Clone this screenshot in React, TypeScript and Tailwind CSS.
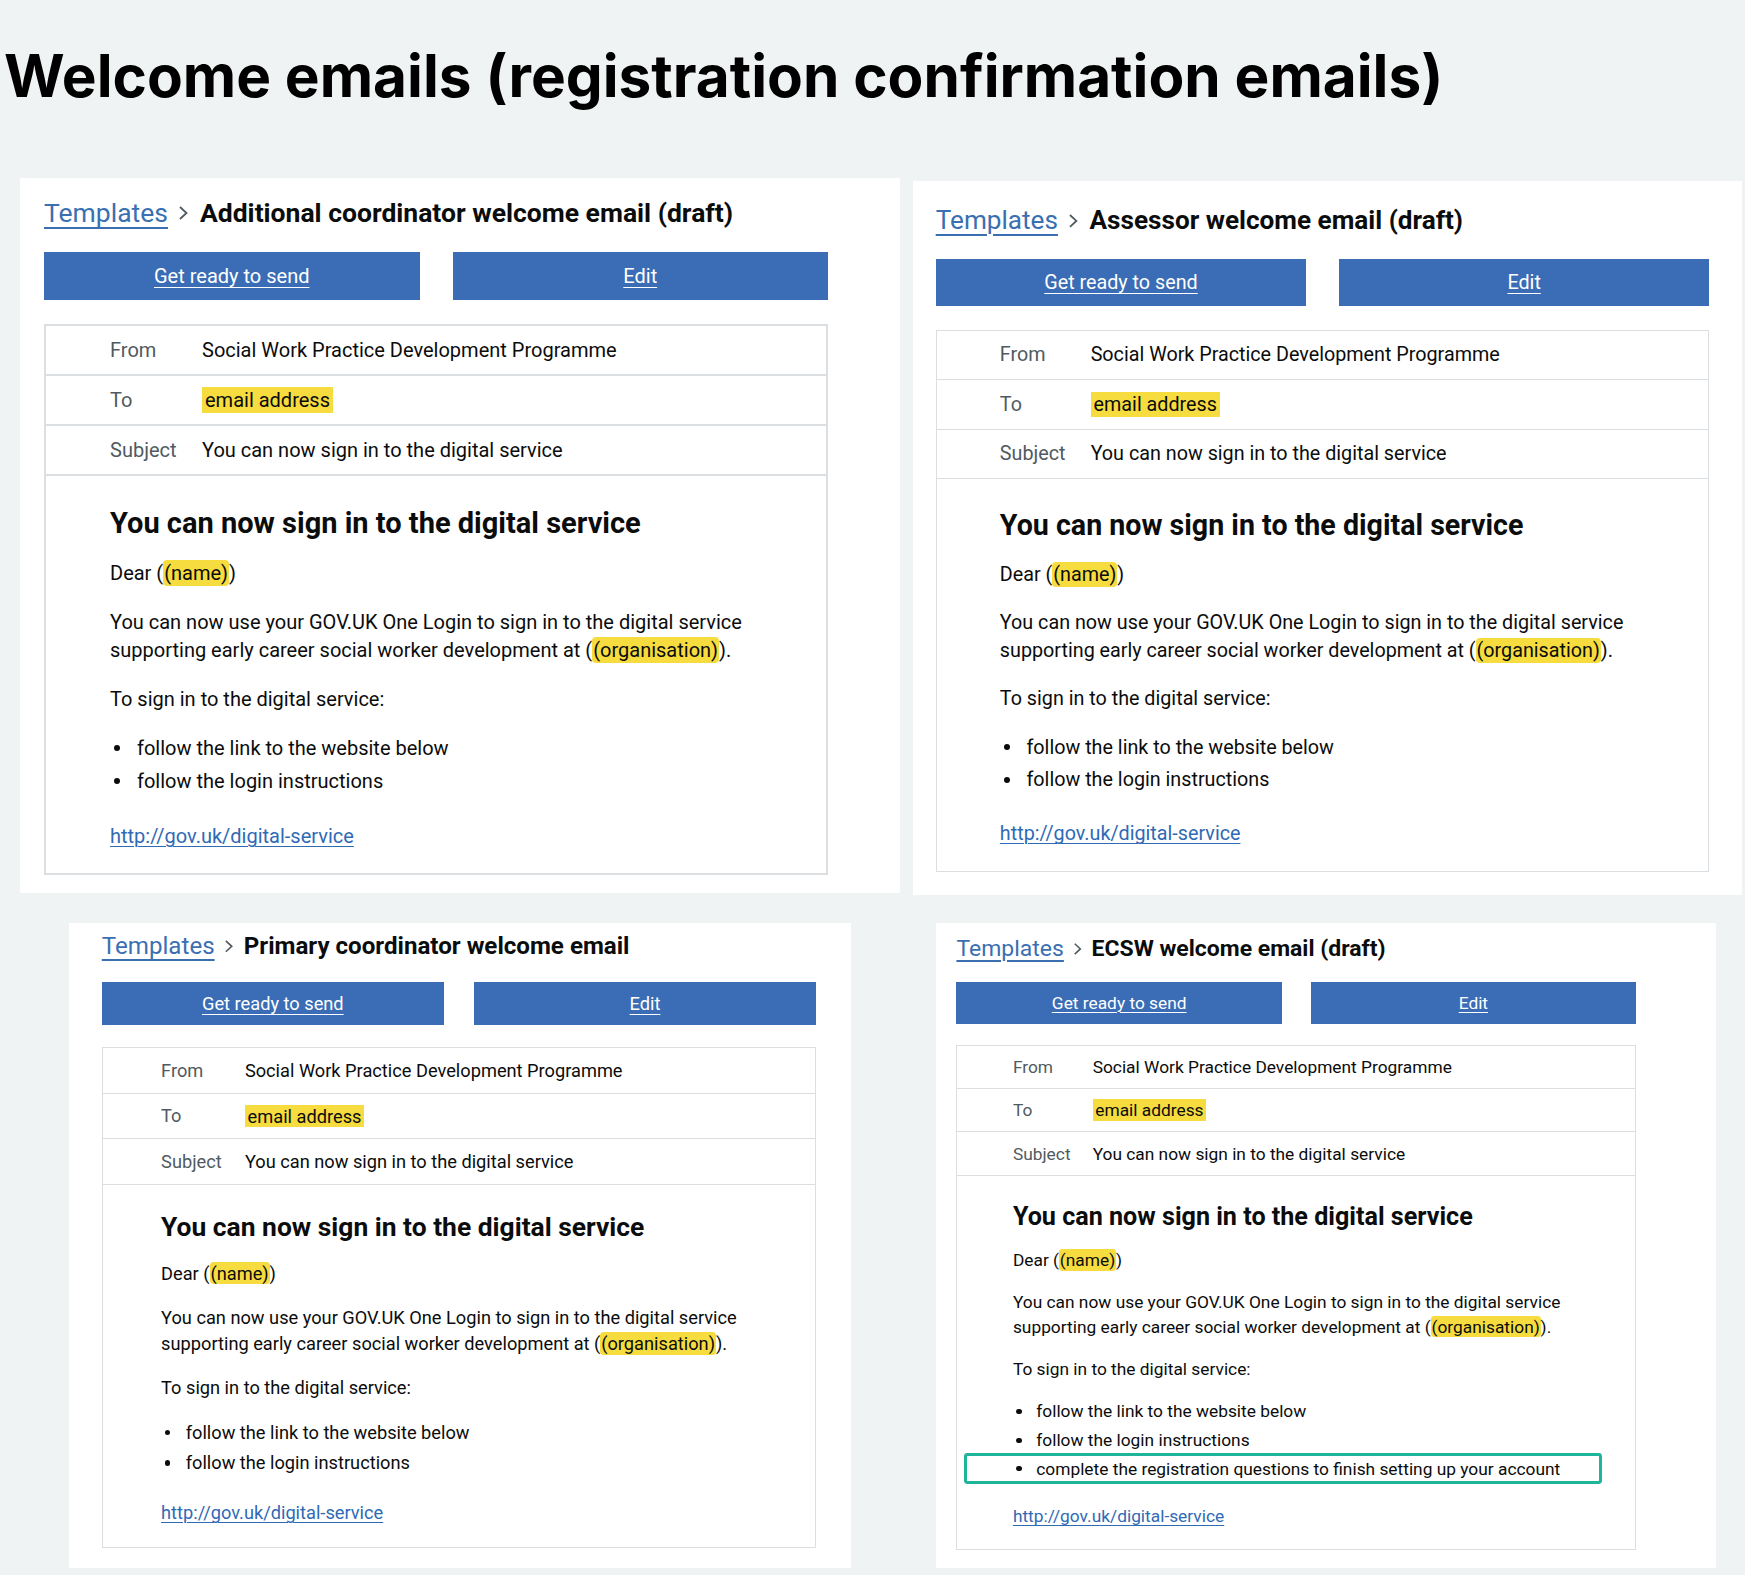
import clsx from "clsx";
import type { ReactNode } from "react";

function Hl({ children, square }: { children: ReactNode; square?: boolean }) {
  return (
    <span
      className={clsx(
        "bg-[#f6dc3f]",
        square ? "px-[3px] py-[1px]" : "rounded-[4px] px-[1px] py-[1px]",
      )}
    >
      {children}
    </span>
  );
}

function Chevron() {
  return (
    <svg
      aria-hidden="true"
      className="mr-[11px] ml-[10px] h-[16px] w-[11px] shrink-0"
      viewBox="0 0 11 16"
      fill="none"
    >
      <path d="M2 2 L8.5 8 L2 14" stroke="#505a5f" strokeWidth="1.8" />
    </svg>
  );
}

function Bullet({ children, marked }: { children: ReactNode; marked?: boolean }) {
  return (
    <li className="relative flex items-center leading-[28px]">
      <span className="mr-[17px] ml-[4px] h-[6px] w-[6px] shrink-0 rounded-full bg-[#0b0c0c]" />
      <span>{children}</span>
      {marked && (
        <span className="pointer-events-none absolute top-[-4px] left-[-56px] h-[35px] w-[736px] rounded-[4px] border-[3.5px] border-[#1fb59b]" />
      )}
    </li>
  );
}

type PanelProps = {
  title: string;
  className: string;
  extraBullet?: boolean;
};

function Panel({ title, className, extraBullet }: PanelProps) {
  const meta = [
    { label: "From", value: "Social Work Practice Development Programme" },
    { label: "To", value: <Hl square>email address</Hl> },
    { label: "Subject", value: "You can now sign in to the digital service" },
  ];

  return (
    <section className={clsx("shrink-0 bg-white font-['Roboto',sans-serif] text-[#0b0c0c]", className)}>
      <div className="w-[784px]">
        <h2 className="flex h-[36px] items-center text-[26.5px] leading-[36px] whitespace-nowrap">
          <a href="#" className="text-[#3a6fb1] underline decoration-[2px] underline-offset-[5px]">
            Templates
          </a>
          <Chevron />
          <span className="font-bold">{title}</span>
        </h2>

        <div className="mt-[21px] grid grid-cols-2 gap-[33px]">
          {["Get ready to send", "Edit"].map((label) => (
            <button
              key={label}
              className="h-[48px] bg-[#3a6db5] text-[20px] text-white underline decoration-[1px] underline-offset-[4px]"
            >
              {label}
            </button>
          ))}
        </div>

        <div className="mt-[24px] border-2 border-[#dcdfe1]">
          {meta.map((row) => (
            <div
              key={row.label}
              className="flex h-[50px] items-center border-b-2 border-[#dcdfe1] pl-[64px] text-[20px]"
            >
              <span className="w-[92px] shrink-0 text-[#505a5f]">{row.label}</span>
              <span>{row.value}</span>
            </div>
          ))}

          <div className="pt-[29px] pb-[23px] pl-[64px] text-[20px]">
            <h3 className="text-[29px] leading-[36px] font-bold">
              You can now sign in to the digital service
            </h3>
            <p className="mt-[18px] leading-[28px]">
              Dear (<Hl>(name)</Hl>)
            </p>
            <p className="mt-[21px] leading-[28px]">
              You can now use your GOV.UK One Login to sign in to the digital service
              <br />
              supporting early career social worker development at (<Hl>(organisation)</Hl>).
            </p>
            <p className="mt-[21px] leading-[28px]">To sign in to the digital service:</p>
            <ul className="mt-[21px] flex flex-col gap-[5px]">
              <Bullet>follow the link to the website below</Bullet>
              <Bullet>follow the login instructions</Bullet>
              {extraBullet && (
                <Bullet marked>complete the registration questions to finish setting up your account</Bullet>
              )}
            </ul>
            <p className="mt-[27px] leading-[28px]">
              <a href="#" className="text-[#2f6ab5] underline decoration-[1px] underline-offset-[3px]">
                http://gov.uk/digital-service
              </a>
            </p>
          </div>
        </div>
      </div>
    </section>
  );
}

export default function App() {
  return (
    <div className="h-[1575px] w-[1745px] overflow-hidden bg-[#f0f3f4]">
      <h1 className="pt-[46px] pl-[4px] font-['Inter',sans-serif] text-[58.5px] leading-[60px] font-bold text-black">
        Welcome emails (registration confirmation emails)
      </h1>

      <div className="mt-[72px] flex items-start gap-[13px] pl-[20px]">
        <Panel
          title="Additional coordinator welcome email (draft)"
          className="h-[715px] w-[880px] pt-[17px] pl-[24px]"
        />
        <Panel
          title="Assessor welcome email (draft)"
          className="mt-[3px] h-[723px] w-[840px] pt-[22px] pl-[23px] [zoom:0.987]"
        />
      </div>

      <div className="mt-[28px] flex items-start gap-[85px] pl-[69px]">
        <Panel
          title="Primary coordinator welcome email"
          className="h-[708px] w-[858px] pt-[8px] pl-[36px] [zoom:0.911]"
        />
        <Panel
          title="ECSW welcome email (draft)"
          className="h-[744px] w-[900px] pt-[12px] pl-[24px] [zoom:0.867]"
          extraBullet
        />
      </div>
    </div>
  );
}
